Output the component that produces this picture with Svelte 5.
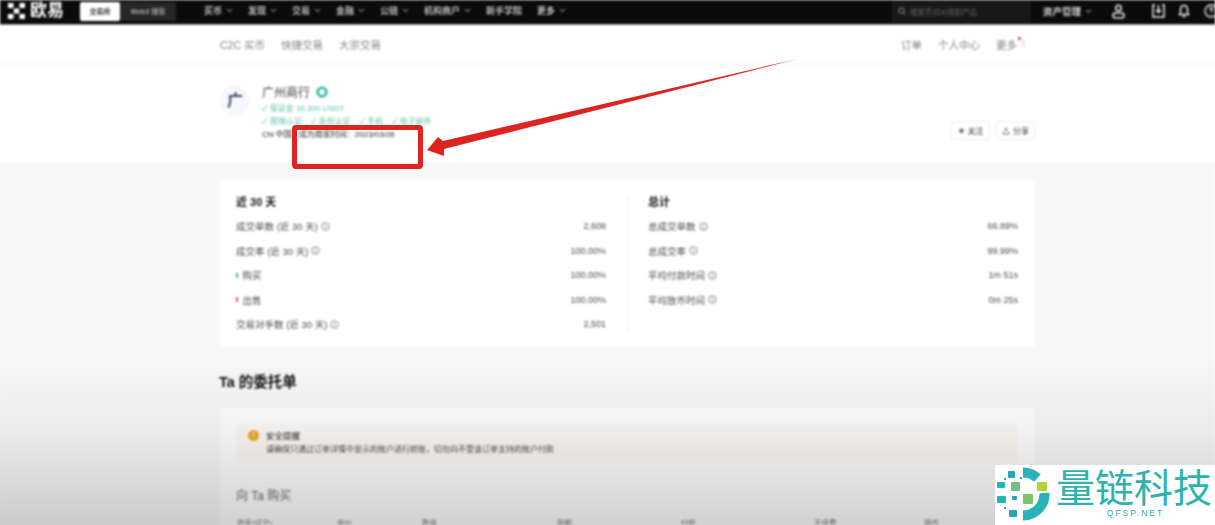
<script>
  const navItems = [
    { label: '买币', caret: true }, { label: '发现', caret: true }, { label: '交易', caret: true },
    { label: '金融', caret: true }, { label: '公链', caret: true }, { label: '机构商户', caret: true },
    { label: '新手学院', caret: false }, { label: '更多', caret: true }
  ];
  const recent = [
    { label: '成交单数 (近 30 天)', value: '2,608', info: true },
    { label: '成交率 (近 30 天)', value: '100.00%', info: true },
    { label: '购买', value: '100.00%', mark: 'buy' },
    { label: '出售', value: '100.00%', mark: 'sell' },
    { label: '交易对手数 (近 30 天)', value: '2,501', info: true }
  ];
  const total = [
    { label: '总成交单数', value: '66.89%', info: true },
    { label: '总成交率', value: '99.99%', info: true },
    { label: '平均付款时间', value: '1m 51s', info: true },
    { label: '平均放币时间', value: '0m 25s', info: true }
  ];
  const columns = ['商家(成交)', '单价', '数量', '限额', '付款', '手续费', '操作'];
</script>

<div class="page">
  <div class="blurred">
    <header class="topbar">
      <div class="brand">
        <svg width="17" height="16" viewBox="0 0 17 16" fill="#fff"><rect x="0" y="0" width="5.500" height="5"/><rect x="11.500" y="0" width="5.500" height="5"/><rect x="5.800" y="5.500" width="5.400" height="5"/><rect x="0" y="11" width="5.500" height="5"/><rect x="11.500" y="11" width="5.500" height="5"/></svg>
        <span>欧易</span>
      </div>
      <div class="switch"><span class="on">交易所</span><span class="off">Web3 钱包</span></div>
      <nav class="nav">
        {#each navItems as n}
          <span class="nav-item">{n.label}{#if n.caret}<svg width="7" height="5" viewBox="0 0 7 5"><path d="M1 1l2.500 2.500L6 1" fill="none" stroke="#bbb" stroke-width="1"/></svg>{/if}</span>
        {/each}
      </nav>
      <div class="top-right">
        <div class="search">
          <svg width="8" height="8" viewBox="0 0 8 8"><circle cx="3.500" cy="3.500" r="2.700" fill="none" stroke="#999" stroke-width="1"/><path d="M5.500 5.500L7.500 7.500" stroke="#999"/></svg>
          <span>搜索币对/K线和产品</span>
        </div>
        <span class="assets">资产管理<svg width="7" height="5" viewBox="0 0 7 5"><path d="M1 1l2.500 2.500L6 1" fill="none" stroke="#bbb"/></svg></span>
        <svg class="user" width="13" height="15" viewBox="0 0 13 15" fill="none" stroke="#eee" stroke-width="1.500"><circle cx="6.500" cy="4" r="2.800"/><rect x="1" y="9" width="11" height="5" rx="2.500"/></svg>
        <svg class="dl" width="13" height="14" viewBox="0 0 13 14" fill="none" stroke="#eee" stroke-width="1.500"><path d="M3 1H1v12h11V1h-2"/><path d="M6.500 1v7M4 6l2.500 2.500L9 6"/></svg>
        <svg class="bell" width="12" height="14" viewBox="0 0 12 14" fill="none" stroke="#eee" stroke-width="1.500"><path d="M6 1.500c-2.400 0-3.500 2-3.500 4v3L1.500 10.500h9l-1-2v-3c0-2-1.100-4-3.500-4z"/><path d="M4.500 12.500h3"/></svg>
        <svg class="help" width="14" height="14" viewBox="0 0 14 14" fill="none" stroke="#eee" stroke-width="1.300"><circle cx="7" cy="7" r="6"/><path d="M5.500 5.500c0-2 3-2 3 0 0 1-1.500 1-1.500 2.500M7 10v.8"/></svg>
      </div>
    </header>

    <div class="subnav">
      <div class="sub-inner">
        <div class="sub-group left"><span>C2C 买币</span><span>快捷交易</span><span>大宗交易</span></div>
        <div class="sub-group right"><span>订单</span><span>个人中心</span><span class="more">更多<i class="dot"></i><i class="bar"></i></span></div>
      </div>
    </div>

    <section class="profile">
      <div class="profile-inner">
        <div class="avatar">广</div>
        <div class="info">
          <div class="name">广州商行
            <svg width="12" height="12" viewBox="0 0 12 12"><circle cx="6" cy="6" r="4.300" fill="none" stroke="#2fb5a8" stroke-width="2.600"/></svg>
          </div>
          <div class="green one">✓ 保证金 10,300 USDT</div>
          <div class="green two"><span>✓ 视频认证</span><span>✓ 身份认证</span><span>✓ 手机</span><span>✓ 电子邮件</span></div>
          <div class="meta"><span>CN 中国</span><span class="since">成为商家时间：2023/03/26</span></div>
        </div>
        <div class="actions">
          <button><svg width="7" height="7" viewBox="0 0 7 7"><path d="M3.500 .5l1 2 2 .3-1.500 1.400.4 2.200-1.900-1-1.900 1 .4-2.200L.5 2.800l2-.3z" fill="#666"/></svg>关注</button>
          <button><svg width="8" height="8" viewBox="0 0 8 8" fill="none" stroke="#8a6060"><path d="M4 5V1M2.500 2.500L4 1l1.500 1.500M1 4.500V7h6V4.500"/></svg>分享</button>
        </div>
      </div>
    </section>

    <main class="content">
      <section class="card stats">
        <div class="col">
          <h3>近 30 天</h3>
          {#each recent as r}
            <div class="row">
              <span class="lab">
                {#if r.mark}<i class="mark {r.mark}"></i>{/if}{r.label}
                {#if r.info}<svg class="ico" width="9" height="9" viewBox="0 0 8 8"><circle cx="4" cy="4" r="3.300" fill="none" stroke="#777" stroke-width=".8"/><path d="M4 3.500v2.200M4 2.200v.7" stroke="#777" stroke-width=".8"/></svg>{/if}
              </span>
              <span class="val">{r.value}</span>
            </div>
          {/each}
        </div>
        <div class="divider"></div>
        <div class="col">
          <h3>总计</h3>
          {#each total as r}
            <div class="row">
              <span class="lab">{r.label}<svg class="ico" width="9" height="9" viewBox="0 0 8 8"><circle cx="4" cy="4" r="3.300" fill="none" stroke="#777" stroke-width=".8"/><path d="M4 3.500v2.200M4 2.200v.7" stroke="#777" stroke-width=".8"/></svg></span>
              <span class="val">{r.value}</span>
            </div>
          {/each}
        </div>
      </section>

      <h2>Ta 的委托单</h2>

      <section class="card orders">
        <div class="notice">
          <svg width="11" height="11" viewBox="0 0 11 11"><circle cx="5.500" cy="5.500" r="5.500" fill="#eaa92a"/><path d="M5.500 2.500v3.500M5.500 7.500v1" stroke="#fff" stroke-width="1.100"/></svg>
          <div>
            <div class="n-title">安全提醒</div>
            <div class="n-text">请确保只通过订单详情中显示的账户进行转账，切勿向不受该订单支持的账户付款</div>
          </div>
        </div>
        <div class="buy-title">向 Ta 购买</div>
        <div class="thead">{#each columns as c}<span>{c}</span>{/each}</div>
      </section>
    </main>
  </div>

  <div class="shade"></div>

  <div class="callout"></div>
  <svg class="arrow" width="385" height="105" viewBox="0 0 385 105">
    <path d="M377 4 L23 86 L18 82 L7 95 L24 101 L24 94 Z" fill="#dd2420"/>
  </svg>

  <div class="watermark">
    <svg class="wm-logo" width="54" height="58" viewBox="0 0 54 58" fill="none">
      <path d="M27 7.500A21.500 21.500 0 0 1 41.400 13" stroke="#27b3b8" stroke-width="10"/>
      <path d="M48.500 28A21.500 21.500 0 0 1 27 50.500" stroke="#27b3b8" stroke-width="10"/>
      <rect x="12" y="6" width="7" height="7" rx="1" fill="#2aa4b5"/>
      <rect x="1" y="17" width="8" height="6" rx="1" fill="#27b3b8"/>
      <rect x="15" y="17" width="9" height="9" rx="1" fill="#74c27f"/>
      <rect x="41" y="17" width="10" height="9" rx="1" fill="#b3d23a"/>
      <rect x="1" y="31" width="9" height="7" rx="1" fill="#27b3b8"/>
      <rect x="16" y="31" width="5" height="4" rx="1" fill="#2aa4b5"/>
      <rect x="27" y="29" width="10" height="10" rx="1" fill="#7cc36c"/>
      <rect x="13" y="45" width="8" height="7" rx="1" fill="#2aa4b5"/>
      <rect x="8" y="13" width="2" height="2" fill="#2aa4b5"/>
      <rect x="24" y="12" width="2" height="2" fill="#2aa4b5"/>
      <rect x="8" y="42" width="2" height="2" fill="#2aa4b5"/>
    </svg>
    <div class="wm-text">
      <div class="wm-cn">量链科技</div>
      <div class="wm-en">QFSP.NET</div>
    </div>
  </div>
</div>

<style>
  :global(body) { margin: 0; background: #fff; }
  .page {
    position: relative; width: 1215px; height: 525px; overflow: hidden;
    font-family: "Liberation Sans", "Noto Sans CJK SC", sans-serif; color: #444;
  }
  .blurred { filter: blur(.9px); height: 525px; overflow: hidden; background: #f8f8f8; }

  .topbar { display: flex; align-items: center; height: 25px; background: #0b0b0b; color: #ccc; font-size: 9px; padding-left: 8px; border-bottom: 1px solid #999; box-sizing: border-box; }
  .brand { display: flex; align-items: center; gap: 5px; color: #fff; font-size: 17px; line-height: 17px; font-weight: 700; width: 72px; margin-top: -3px; }
  .switch { display: flex; height: 19px; width: 96px; background: #262626; border-radius: 2px; font-size: 7px; line-height: 19px; text-align: center; font-weight: 700; margin-top: -2px; }
  .on { background: #fff; color: #333; width: 40px; border-radius: 2px; }
  .off { flex: 1; color: #aaa; }
  .nav { display: flex; gap: 15px; margin-left: 28px; margin-top: -3px; }
  .nav-item { display: flex; align-items: center; gap: 4px; white-space: nowrap; color: #bdbdbd; font-weight: 700; }
  .top-right { margin-left: auto; display: flex; align-items: center; margin-top: -2px; }
  .search { display: flex; align-items: center; gap: 4px; width: 139px; height: 24px; padding-left: 6px; box-sizing: border-box; background: #181818; color: #666; font-size: 7.500px; }
  .assets { display: flex; align-items: center; gap: 4px; margin-left: 12px; color: #ddd; font-weight: 700; font-size: 9.500px; }
  .user { margin-left: 20px; }
  .dl { margin-left: 27px; }
  .bell { margin-left: 13px; }
  .help { margin-left: 14px; margin-right: -3px; }

  .subnav { background: #fff; height: 40px; border-bottom: 1px solid #f2f2f2; box-sizing: border-box; }
  .sub-inner { width: 815px; margin-left: 220px; height: 38px; display: flex; justify-content: space-between; align-items: center; font-size: 10.500px; color: #858585; }
  .sub-group { display: flex; gap: 16px; }
  .more { position: relative; padding-right: 7px; margin-right: 11px; }
  .dot { position: absolute; right: 3px; top: 0; width: 3px; height: 3px; border-radius: 50%; background: #c0304a; }
  .bar { position: absolute; right: 0; top: 3px; width: 1px; height: 8px; background: #ccc; }

  .profile { background: #fff; height: 97px; }
  .profile-inner { width: 815px; margin-left: 220px; display: flex; position: relative; height: 97px; }
  .avatar { width: 30px; height: 31px; margin-top: 20px; border-radius: 50%; background: #f7f8fc; color: #3c4f7c; font-size: 16px; line-height: 31px; text-align: center; font-weight: 700; }
  .info { margin-left: 12px; padding-top: 19px; font-size: 8px; }
  .name { display: flex; align-items: center; gap: 6px; font-size: 12px; color: #444; height: 15px; }
  .green { color: #5cbda9; }
  .one { margin-top: 4px; height: 11px; line-height: 11px; }
  .two { margin-top: 2px; display: flex; gap: 9px; height: 11px; line-height: 11px; }
  .meta { display: flex; gap: 7px; margin-top: 2px; color: #222; line-height: 11px; }
  .actions { position: absolute; right: 0; top: 56px; display: flex; gap: 6px; }
  .actions button { display: flex; align-items: center; gap: 3px; height: 19px; width: 39px; justify-content: center; padding: 0; border: 1px solid #eee; border-radius: 3px; background: #fff; font: inherit; font-size: 8px; color: #333; }

  .content { width: 815px; margin-left: 220px; padding-top: 18px; }
  .card { background: #fff; border-radius: 4px; }
  .stats { height: 167px; display: flex; padding: 15px 0 0 16px; box-sizing: border-box; }
  .col { width: 370px; }
  .col:last-child { margin-left: 20px; }
  .divider { width: 1px; height: 135px; margin: 2px 0 0 21px; background: #f0f0f0; }
  h3 { margin: 0 0 5px; font-size: 11px; color: #111; line-height: 14px; font-weight: 700; }
  .row { display: flex; justify-content: space-between; align-items: center; height: 24.500px; font-size: 9.500px; color: #4a4a4a; }
  .val { font-size: 9px; }
  .lab { display: flex; align-items: center; }
  .ico { margin-left: 3px; }
  .mark { width: 1.500px; height: 5px; margin-right: 5px; }
  .buy { background: #4fae8a; }
  .sell { background: #d9566b; }

  h2 { margin: 26px 0 0 -1px; height: 18px; line-height: 18px; font-size: 14.500px; color: #111; font-weight: 700; }
  .orders { margin-top: 17px; height: 130px; padding: 16px 17px; box-sizing: border-box; }
  .notice { display: flex; gap: 7px; height: 38px; padding: 6px 11px; box-sizing: border-box; background: #fdf9f5; border-radius: 3px; font-size: 8px; width: 781px; }
  .n-title { font-size: 8.500px; color: #222; height: 13px; line-height: 13px; }
  .n-text { color: #444; margin-top: 2px; line-height: 10px; }
  .buy-title { margin-top: 26px; font-size: 12px; color: #666; line-height: 16px; margin-left: -1px; }
  .thead { display: grid; grid-template-columns: 100px 85px 135px 124px 133px 110px 1fr; margin-top: 13px; font-size: 7.500px; color: #777; }

  .shade { position: absolute; left: 0; right: 0; top: 350px; height: 175px; background: linear-gradient(to bottom, rgba(0,0,0,0), rgba(0,0,0,.05) 45%, rgba(0,0,0,.18)); pointer-events: none; }
  .callout { position: absolute; left: 292px; top: 125px; width: 131px; height: 44px; box-sizing: border-box; border: 5px solid #dd2420; border-radius: 4px; }
  .arrow { position: absolute; left: 420px; top: 55px; }
  .watermark { position: absolute; left: 995px; top: 465px; width: 220px; height: 60px; background: #fff; display: flex; align-items: flex-start; gap: 6px; padding-left: 1px; box-sizing: border-box; overflow: hidden; }
  .wm-text { width: 159px; }
  .wm-cn { font-family: "Noto Sans CJK SC", sans-serif; font-size: 39px; line-height: 40px; color: #2db3ad; white-space: nowrap; }
  .wm-en { text-align: center; font-size: 8.500px; letter-spacing: 2px; color: #3aa; line-height: 10px; margin-top: 3px; font-family: "Liberation Sans", sans-serif; }
</style>
